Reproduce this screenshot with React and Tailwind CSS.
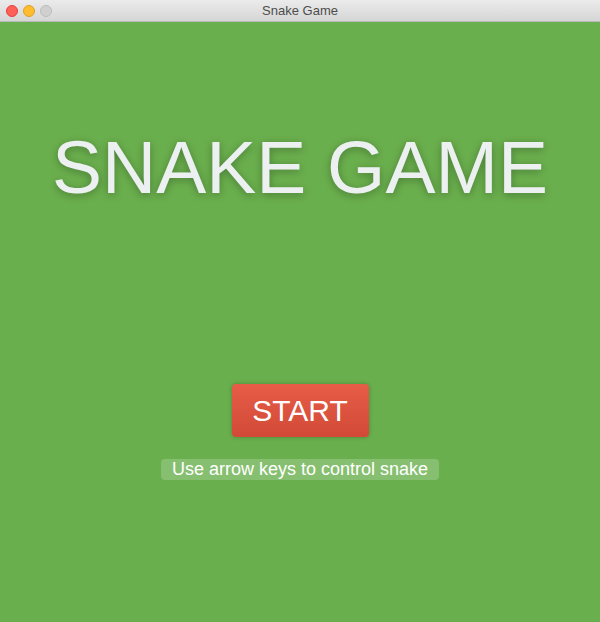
export default function App() {
  return (
    <div className="w-[600px] h-[622px] flex flex-col overflow-hidden" style={{ fontFamily: '"Liberation Sans", Arial, sans-serif' }}>
      <div className="h-[22px] shrink-0 relative flex items-center justify-center bg-gradient-to-b from-[#ebebeb] to-[#d6d6d6] border-b border-[#b9b9b9]">
        <div className="absolute left-[6px] top-[5px] flex gap-[5px]">
          <div className="w-[12px] h-[12px] rounded-full bg-[#fe5f57] border border-[#e0443e]" />
          <div className="w-[12px] h-[12px] rounded-full bg-[#febc2e] border border-[#dea123]" />
          <div className="w-[12px] h-[12px] rounded-full bg-[#d0d0d0] border border-[#bdbdbd]" />
        </div>
        <span className="text-[13px] text-[#4d4d4d]">Snake Game</span>
      </div>
      <div className="flex-1 bg-[#6aaf4d] flex flex-col items-center">
        <h1 className="mt-[108px] text-[75px] leading-none text-[#ecf0f1] [text-shadow:0_2px_8px_rgba(0,0,0,0.3)]">SNAKE GAME</h1>
        <button className="mt-[179px] w-[137px] h-[53px] rounded-[4px] bg-gradient-to-b from-[#e65c47] to-[#d24a37] text-white text-[30px] leading-none shadow-[0_0_4px_rgba(0,0,0,0.25)]">START</button>
        <div className="mt-[22px] h-[21px] px-[11px] rounded-[4px] bg-white/20 text-white text-[18px] leading-[21px]">Use arrow keys to control snake</div>
      </div>
    </div>
  );
}
